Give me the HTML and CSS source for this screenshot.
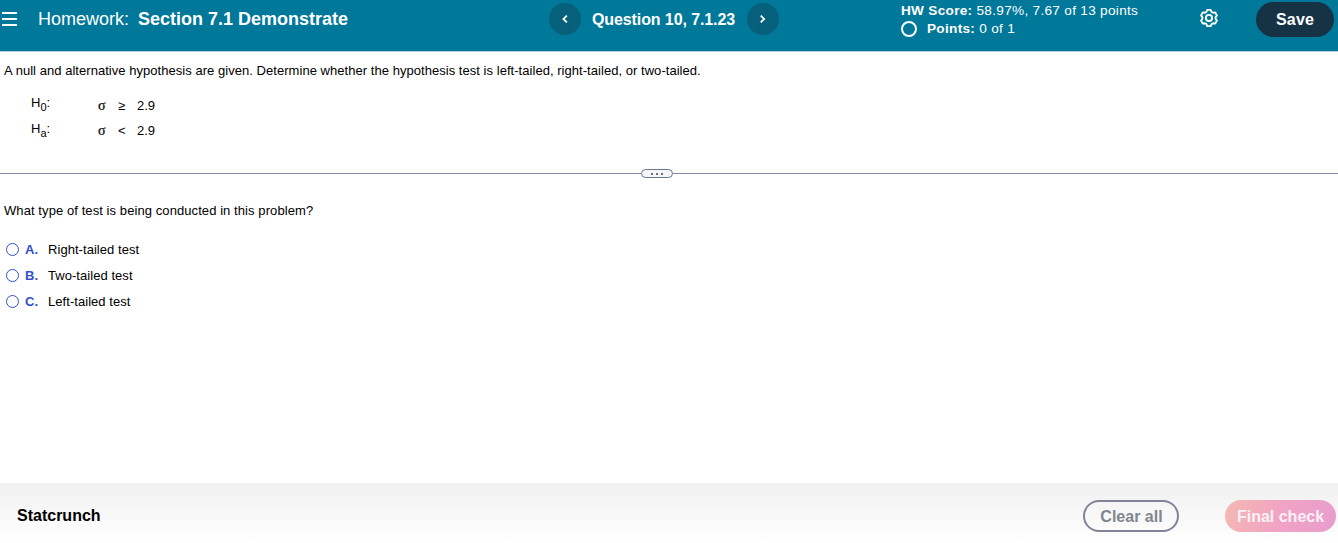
FILE: index.html
```html
<!DOCTYPE html>
<html lang="en">
<head>
  <meta charset="utf-8">
  <title>Section 7.1 Demonstrate</title>
  <link rel="stylesheet" href="styles.css">
</head>
<body>
  <header class="header">
    <div class="header-left">
      <svg class="menu-icon" width="15" height="14" viewBox="0 0 15 14">
        <path d="M0 1h15M0 7h15M0 13h15" stroke="#fff" stroke-width="2"/>
      </svg>
      <span class="homework">Homework:</span>
      <span class="section">Section 7.1 Demonstrate</span>
    </div>

    <nav class="question-nav">
      <button class="nav-button" aria-label="Previous">
        <svg width="6" height="8" viewBox="0 0 6 8"><path d="M4.9 .7L1.4 4l3.5 3.3" fill="none" stroke="#fff" stroke-width="1.8"/></svg>
      </button>
      <span class="question">Question 10, 7.1.23</span>
      <button class="nav-button" aria-label="Next">
        <svg width="6" height="8" viewBox="0 0 6 8"><path d="M.7 .7L4.2 4 .7 7.3" fill="none" stroke="#fff" stroke-width="1.8"/></svg>
      </button>
    </nav>

    <div class="score">
      <div><b>HW Score:</b> 58.97%, 7.67 of 13 points</div>
      <div class="points"><span class="points-ring"></span><span><b>Points:</b> 0 of 1</span></div>
    </div>

    <svg class="gear" width="20" height="20" viewBox="0 0 20 20" fill="none" stroke="#fff" stroke-width="1.9" stroke-linejoin="round">
      <path d="M8.3 1.9h3.4l.9 2 1.4.8 2.2-.3 1.7 3-1.3 1.8v1.6l1.3 1.8-1.7 3-2.2-.3-1.4.8-.9 2H8.3l-.9-2-1.4-.8-2.2.3-1.7-3 1.3-1.8V9.2L2.1 7.4l1.7-3 2.2.3 1.4-.8z"/>
      <circle cx="10" cy="10" r="3.1"/>
    </svg>
    <button class="save">Save</button>
  </header>

  <main class="content">
    <p class="prompt">A null and alternative hypothesis are given. Determine whether the hypothesis test is left-tailed, right-tailed, or two-tailed.</p>

    <div class="hypotheses">
      <div class="labels">
        <span>H<sub>0</sub>:</span>
        <span>H<sub>a</sub>:</span>
      </div>
      <div class="statements">
        <div class="statement"><span class="sigma">σ</span><span class="operator">≥</span><span>2.9</span></div>
        <div class="statement"><span class="sigma">σ</span><span class="operator">&lt;</span><span>2.9</span></div>
      </div>
    </div>

    <div class="divider">
      <span class="line line-left"></span>
      <span class="handle"><i></i><i></i><i></i></span>
      <span class="line"></span>
    </div>

    <p class="prompt prompt-question">What type of test is being conducted in this problem?</p>

    <div class="choices">
      <label class="choice"><input type="radio" name="answer"><b>A.</b><span>Right-tailed test</span></label>
      <label class="choice"><input type="radio" name="answer"><b>B.</b><span>Two-tailed test</span></label>
      <label class="choice"><input type="radio" name="answer"><b>C.</b><span>Left-tailed test</span></label>
    </div>
  </main>

  <footer class="footer">
    <span class="tool">Statcrunch</span>
    <button class="clear">Clear all</button>
    <button class="check">Final check</button>
  </footer>
</body>
</html>
```
FILE: styles.css
```css
* {
  box-sizing: border-box;
}

body {
  display: flex;
  flex-direction: column;
  height: 543px;
  margin: 0;
  overflow: hidden;
  background-color: #fff;
  color: #000;
  font-family: "Liberation Sans", Arial, sans-serif;
  font-size: 13px;
}

button {
  padding: 0;
  border: none;
  font-family: inherit;
  font-size: 16px;
  font-weight: bold;
  cursor: pointer;
}

/* Top bar */
.header {
  display: flex;
  align-items: flex-start;
  height: 52px;
  flex-shrink: 0;
  background-color: #007899;
  border-bottom: 1px solid #b9cfdf;
  color: #fff;
}

.header-left {
  display: flex;
  align-items: center;
  width: 549px;
  height: 38px;
  padding-left: 2px;
  font-size: 18px;
}

.homework {
  margin-left: 21px;
}

.section {
  margin-left: 9px;
  font-weight: bold;
}

.question-nav {
  display: flex;
  align-items: center;
  justify-content: space-between;
  width: 230px;
  margin-top: 3px;
}

.nav-button {
  display: flex;
  align-items: center;
  justify-content: center;
  width: 32px;
  height: 32px;
  border-radius: 50%;
  background-color: #07607b;
}

.question {
  padding: 2px 1px 0 0;
  font-size: 16px;
  font-weight: bold;
  letter-spacing: -0.1px;
}

.score {
  width: 298px;
  margin: 2px 0 0 122px;
  font-size: 13.6px;
  line-height: 18px;
  letter-spacing: 0.3px;
}

.points {
  display: flex;
  align-items: center;
}

.points-ring {
  width: 16px;
  height: 16px;
  margin-right: 10px;
  border: 2px solid #fff;
  border-radius: 50%;
}

.gear {
  margin-top: 8px;
}

.save {
  width: 78px;
  height: 35px;
  margin: 2px 0 0 37px;
  border-radius: 18px;
  background-color: #163346;
  color: #fff;
  letter-spacing: 0.2px;
}

/* Question */
.content {
  flex: 1;
}

.prompt {
  margin: 0;
  padding: 11px 4px 0;
  line-height: 16px;
  letter-spacing: 0.041px;
}

.prompt-question {
  padding-top: 0;
  letter-spacing: 0.08px;
}

.hypotheses {
  display: flex;
  height: 65px;
  padding: 11px 0 0 31px;
}

.labels {
  width: 67px;
  line-height: 26px;
}

.labels span {
  display: block;
}

.labels sub {
  font-size: 11px;
  line-height: 0;
  vertical-align: -4px;
}

.statements {
  padding-top: 3px;
}

.statement {
  display: flex;
  align-items: center;
  height: 25px;
}

.sigma {
  width: 20px;
  font-family: "Liberation Serif", serif;
  font-size: 14px;
  -webkit-text-stroke: 0.2px #000;
}

.operator {
  width: 19px;
}

.divider {
  display: flex;
  align-items: center;
  height: 10px;
  margin: 24px 0 25px;
}

.line {
  flex: 1;
  height: 1px;
  background-color: #7f8c9d;
}

.line-left {
  flex: 0 0 641px;
}

.handle {
  display: flex;
  align-items: center;
  justify-content: center;
  gap: 3px;
  width: 32px;
  height: 9px;
  border: 1px solid #67798c;
  border-radius: 5px;
  background-color: #f4f5f9;
}

.handle i {
  width: 2px;
  height: 2px;
  margin-top: 1px;
  background-color: #6a6f7a;
}

.choices {
  padding: 17px 0 0 6px;
  letter-spacing: 0.05px;
}

.choice {
  display: flex;
  align-items: center;
  height: 26px;
}

.choice input {
  appearance: none;
  width: 13px;
  height: 13px;
  margin: 0 6px 0 0;
  border: 1px solid #3350cc;
  border-radius: 50%;
}

.choice b {
  width: 23px;
  color: #3350cc;
}

/* Bottom bar */
.footer {
  display: flex;
  align-items: center;
  height: 60px;
  flex-shrink: 0;
  padding: 5px 2px 0 17px;
  background: linear-gradient(#f0f0f0, #fff);
}

.tool {
  margin-right: auto;
  font-size: 16px;
  font-weight: bold;
}

.clear {
  width: 96px;
  height: 32px;
  margin-right: 46px;
  padding: 2px 0 0 1px;
  border: 2px solid #7f8496;
  border-radius: 16px;
  background-color: transparent;
  color: #80868f;
}

.check {
  width: 111px;
  height: 32px;
  padding-top: 2px;
  border-radius: 16px;
  background: linear-gradient(110deg, #f4b9b1, #f1a3c4 50%, #e79dce);
  color: #fdf1f7;
}
```
